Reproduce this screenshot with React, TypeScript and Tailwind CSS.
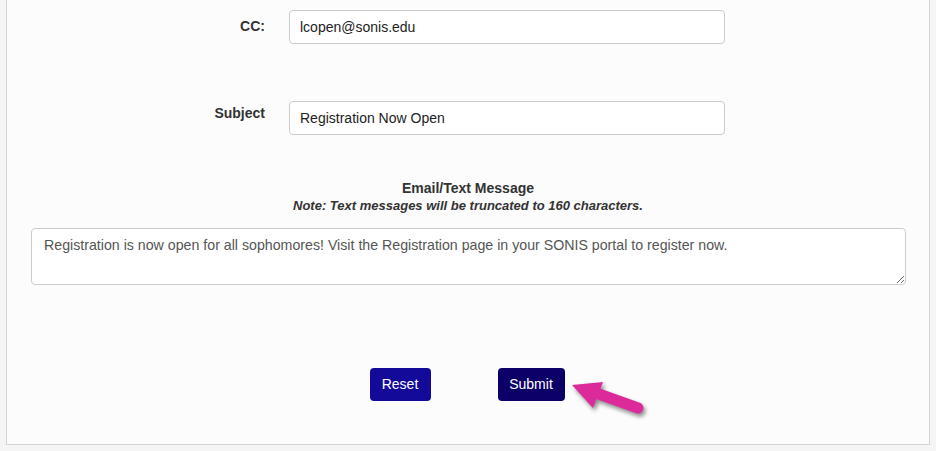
export default function App() {
  return (
    <div className="min-h-screen bg-[#f5f5f5] font-['Liberation_Sans',Arial,sans-serif] text-[#333]">
      <div className="relative ml-[6px] w-[924px] border-x border-b border-[#d4d4d4] bg-[#fcfcfc] pt-[10px] pb-[43px]">
        {/* CC */}
        <div className="flex items-start">
          <label className="w-[258px] pt-[6px] text-right text-[14px] font-bold leading-[20px] text-[#333]">CC:</label>
          <input
            type="text"
            defaultValue="lcopen@sonis.edu"
            className="ml-[24px] h-[34px] w-[436px] rounded-[4px] border border-[#ccc] bg-white px-[10px] text-[14px] text-[#222] outline-none"
          />
        </div>

        {/* Subject */}
        <div className="mt-[57px] flex items-start">
          <label className="w-[258px] pt-[2px] text-right text-[14px] font-bold leading-[20px] text-[#333]">Subject</label>
          <input
            type="text"
            defaultValue="Registration Now Open"
            className="ml-[24px] h-[34px] w-[436px] rounded-[4px] border border-[#ccc] bg-white px-[10px] text-[14px] text-[#222] outline-none"
          />
        </div>

        {/* Message */}
        <div className="mt-[43px] text-center">
          <div className="text-[14px] font-bold leading-[20px] text-[#333]">Email/Text Message</div>
          <div className="text-[13px] font-bold italic leading-[16px] text-[#333]">
            Note: Text messages will be truncated to 160 characters.
          </div>
        </div>
        <div className="mt-[14px] px-[24px]">
          <textarea
            defaultValue="Registration is now open for all sophomores! Visit the Registration page in your SONIS portal to register now."
            className="block h-[57px] w-[875px] rounded-[4px] border border-[#ccc] bg-white px-[12px] py-[6px] text-[14.2px] leading-[20px] text-[#555] outline-none"
          />
        </div>

        {/* Buttons */}
        <div className="mt-[83px] flex justify-center gap-[67px] pr-[2px]">
          <button className="h-[33px] w-[61px] rounded-[4px] bg-[#140a99] text-[14px] text-white">Reset</button>
          <button className="h-[33px] w-[67px] rounded-[4px] bg-[#0c0068] text-[14px] text-white">Submit</button>
        </div>

        {/* annotation arrow */}
        <svg
          className="pointer-events-none absolute left-[553px] top-[372px] drop-shadow-[2px_3px_2px_rgba(0,0,0,0.45)]"
          width="100"
          height="50"
          viewBox="0 0 100 50"
        >
          <line x1="78" y1="36" x2="36" y2="21" stroke="#dc2a9b" strokeWidth="11" strokeLinecap="round" />
          <polygon points="12,13 43,10 33,36" fill="#dc2a9b" />
        </svg>
      </div>
    </div>
  );
}
